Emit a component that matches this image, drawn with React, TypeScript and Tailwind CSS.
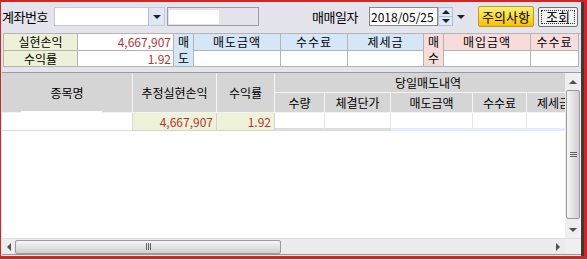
import React from 'react';

const cellBorder = 'border-r border-b border-[#b4b4b4]';

const Down = ({ c = 'border-t-[#202020]' }: { c?: string }) => (
  <div className={`w-0 h-0 border-l-[4px] border-r-[4px] border-t-[4px] border-l-transparent border-r-transparent ${c}`} />
);
const Up = ({ c = 'border-b-[#202020]' }: { c?: string }) => (
  <div className={`w-0 h-0 border-l-[4px] border-r-[4px] border-b-[4px] border-l-transparent border-r-transparent ${c}`} />
);
const Left = () => (
  <div className="w-0 h-0 border-t-[4px] border-b-[4px] border-r-[4px] border-t-transparent border-b-transparent border-r-[#505050]" />
);
const Right = () => (
  <div className="w-0 h-0 border-t-[4px] border-b-[4px] border-l-[4px] border-t-transparent border-b-transparent border-l-[#505050]" />
);

const TopBar = () => (
  <div className="h-[29px] flex items-center pl-[1px] text-[13px] text-black">
    <span className="w-[50px] tracking-[-0.5px]">계좌번호</span>
    <div className="ml-[2px] w-[111px] h-[19px] flex border border-[#c8c8d0] bg-white">
      <div className="flex-1" />
      <div className="w-[16px] bg-[#dbe9f7] border-l border-[#a8c0dc] flex items-center justify-center">
        <Down />
      </div>
    </div>
    <div className="ml-[2px] w-[92px] h-[19px] border border-[#9c9ca4] pl-[1px] pt-[2px]">
      <div className="w-[50px] h-[14px] bg-white" />
    </div>
    <span className="ml-[53px] w-[57px] tracking-[-0.5px]">매매일자</span>
    <div className="w-[69px] h-[19px] border border-[#8a8a8a] bg-white text-[12px] leading-[17px] pl-[1px]">2018/05/25</div>
    <div className="w-[15px] h-[19px] flex flex-col border border-[#a8c0dc] bg-[#dde9f6]">
      <div className="flex-1 flex items-center justify-center"><Up /></div>
      <div className="flex-1 flex items-center justify-center border-t border-[#a8c0dc]"><Down /></div>
    </div>
    <div className="w-[16px] h-[19px] flex items-center justify-center"><Down /></div>
    <button className="ml-[9px] w-[56px] h-[21px] rounded-[2px] border border-[#c89a10] bg-gradient-to-b from-[#fff07a] via-[#ffdc30] to-[#f5c000] text-[13px] leading-none">
      주의사항
    </button>
    <button className="ml-[4px] w-[40px] h-[20px] rounded-[2px] border border-[#707070] bg-[#f2f2f2] p-[2px]">
      <div className="w-full h-full border border-dotted border-[#303030] flex items-center justify-center text-[13px] leading-none">조회</div>
    </button>
  </div>
);

const InfoPanel = () => (
  <div className="mt-[2px] ml-[2px] flex text-[12px] border-t border-l border-[#b4b4b4]">
    <div className="w-[74px] flex flex-col">
      <div className={`h-[17px] ${cellBorder} bg-[#ecf1d8] flex items-center justify-center`}>실현손익</div>
      <div className={`h-[16px] ${cellBorder} bg-[#ecf1d8] flex items-center justify-center`}>수익률</div>
    </div>
    <div className="w-[96px] flex flex-col text-[#b83232]">
      <div className={`h-[17px] ${cellBorder} bg-white flex items-center justify-end pr-[2px]`}>4,667,907</div>
      <div className={`h-[16px] ${cellBorder} bg-white flex items-center justify-end pr-[2px]`}>1.92</div>
    </div>
    <div className={`w-[20px] h-[33px] ${cellBorder} bg-[#d4e6f8] flex flex-col items-center justify-around leading-none`}>
      <span>매</span>
      <span>도</span>
    </div>
    {[
      ['매도금액', 'w-[87px]'],
      ['수수료', 'w-[67px]'],
      ['제세금', 'w-[76px]'],
    ].map(([t, w]) => (
      <div key={t} className={`${w} flex flex-col`}>
        <div className={`h-[17px] ${cellBorder} bg-[#d4e6f8] flex items-center justify-center tracking-[1px]`}>{t}</div>
        <div className={`h-[16px] ${cellBorder} bg-white`} />
      </div>
    ))}
    <div className={`w-[20px] h-[33px] ${cellBorder} bg-[#f8dcdc] flex flex-col items-center justify-around leading-none`}>
      <span>매</span>
      <span>수</span>
    </div>
    {[
      ['매입금액', 'w-[87px]'],
      ['수수료', 'w-[48px]'],
    ].map(([t, w]) => (
      <div key={t} className={`${w} flex flex-col`}>
        <div className={`h-[17px] ${cellBorder} bg-[#f8dcdc] flex items-center justify-center tracking-[1px]`}>{t}</div>
        <div className={`h-[16px] ${cellBorder} bg-white`} />
      </div>
    ))}
  </div>
);

const hd = 'shrink-0 border-r border-b border-[#f4f4f4] flex items-center justify-center';
const subCols: [string, string][] = [
  ['수량', 'w-[50px]'],
  ['체결단가', 'w-[66px]'],
  ['매도금액', 'w-[82px]'],
  ['수수료', 'w-[54px]'],
  ['제세금', 'w-[54px]'],
];

const Grid = () => (
  <div className="mt-[5px] ml-[1px] h-[183px] flex flex-col border-t border-b border-[#9c9c9c] bg-white">
    <div className="flex h-[165px]">
      <div className="flex-1 min-w-0 overflow-hidden text-[12px]">
        <div className="flex w-[579px] h-[40px] bg-[#d5d5d5]">
          <div className={`w-[131px] ${hd}`}>종목명</div>
          <div className={`w-[84px] ${hd}`}>추정실현손익</div>
          <div className={`w-[58px] ${hd}`}>수익률</div>
          <div className="w-[306px] shrink-0 flex flex-col">
            <div className="h-[20px] border-b border-[#f4f4f4] flex items-center justify-center">당일매도내역</div>
            <div className="flex h-[20px]">
              {subCols.map(([t, w]) => (
                <div key={t} className={`${w} ${hd}`}>{t}</div>
              ))}
            </div>
          </div>
        </div>
        <div className="flex w-[579px] h-[18px] relative">
          <div className="absolute left-[19px] -top-[2px] w-[81px] h-[3px] bg-white" />
          <div className="w-[131px] shrink-0 border-r border-b border-[#dcdcdc]" />
          <div className="w-[84px] shrink-0 border-r border-b border-[#d4d4cc] bg-[#eef2d8] text-[#b83232] flex items-center justify-end pr-[3px]">4,667,907</div>
          <div className="w-[58px] shrink-0 border-r border-b border-[#d4d4cc] bg-[#eef2d8] text-[#b83232] flex items-center justify-end pr-[3px]">1.92</div>
          {subCols.map(([t, w], i) => (
            <div key={t} className={`${w} shrink-0 border-r border-[#e6e6e6] border-b-[3px] ${i >= 2 ? 'border-b-[#e4eefa]' : 'border-b-[#dcdcdc]'}`} />
          ))}
        </div>
      </div>
      <div className="w-[16px] shrink-0 flex flex-col bg-[#efefef]">
        <div className="h-[17px] flex items-center justify-center"><Up c="border-b-[#505050]" /></div>
        <div className="flex-1 flex flex-col">
          <div className="h-[129px] mx-[1px] rounded-[2px] border border-[#9a9a9a] bg-gradient-to-r from-[#f6f6f6] to-[#cfcfcf] flex flex-col items-center justify-center gap-[1px]">
            <div className="w-[7px] h-px bg-[#606060]" />
            <div className="w-[7px] h-px bg-[#606060]" />
            <div className="w-[7px] h-px bg-[#606060]" />
          </div>
        </div>
        <div className="h-[17px] flex items-center justify-center"><Down c="border-t-[#505050]" /></div>
      </div>
    </div>
    <div className="flex h-[16px] bg-[#ececec] border-t border-[#e0e0e0]">
      <div className="flex-1 min-w-0 flex items-center">
        <div className="w-[13px] flex justify-center"><Left /></div>
        <div className="w-[266px] h-[14px] rounded-[2px] border border-[#9a9a9a] bg-gradient-to-b from-[#f6f6f6] to-[#cfcfcf] flex items-center justify-center gap-[1px]">
          <div className="w-px h-[7px] bg-[#606060]" />
          <div className="w-px h-[7px] bg-[#606060]" />
          <div className="w-px h-[7px] bg-[#606060]" />
        </div>
        <div className="flex-1" />
        <div className="w-[14px] flex justify-center"><Right /></div>
      </div>
      <div className="w-[16px] shrink-0 bg-[#efefef]" />
    </div>
  </div>
);

export default function App() {
  return (
    <div className="w-[587px] h-[260px] bg-white overflow-hidden font-['Noto_Sans_CJK_KR',sans-serif] text-black">
      <div className="h-[259px] flex border-t-2 border-l border-r-[3px] border-b-[3px] border-[#d42424]">
        <div className="flex-1 min-w-0 flex flex-col bg-[#e4e4ec]">
          <TopBar />
          <InfoPanel />
          <Grid />
        </div>
        <div className="w-[3px] shrink-0 bg-[#3a3a3a]" />
      </div>
    </div>
  );
}
